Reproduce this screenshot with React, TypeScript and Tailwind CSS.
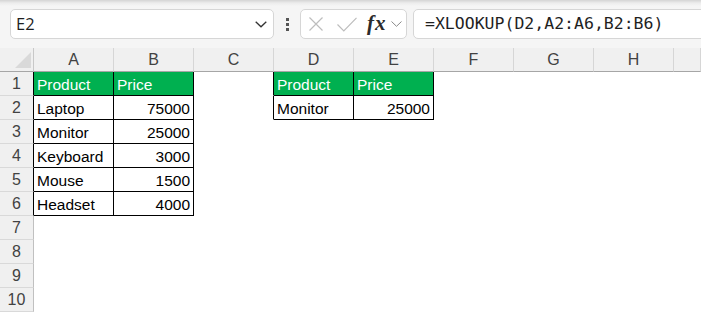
import React from "react";

type CellData = { text: string; right?: boolean; green?: boolean };

const data: Record<string, CellData> = {
  "1,1": { text: "Product", green: true },
  "1,2": { text: "Price", green: true },
  "2,1": { text: "Laptop" },
  "2,2": { text: "75000", right: true },
  "3,1": { text: "Monitor" },
  "3,2": { text: "25000", right: true },
  "4,1": { text: "Keyboard" },
  "4,2": { text: "3000", right: true },
  "5,1": { text: "Mouse" },
  "5,2": { text: "1500", right: true },
  "6,1": { text: "Headset" },
  "6,2": { text: "4000", right: true },
  "1,4": { text: "Product", green: true },
  "1,5": { text: "Price", green: true },
  "2,4": { text: "Monitor" },
  "2,5": { text: "25000", right: true },
};

const inTable = (r: number, c: number) =>
  (r >= 1 && r <= 6 && c >= 1 && c <= 2) || (r >= 1 && r <= 2 && c >= 4 && c <= 5);

const cols = ["A", "B", "C", "D", "E", "F", "G", "H", ""];
const rows = [1, 2, 3, 4, 5, 6, 7, 8, 9, 10];

const cellFont = { fontFamily: '"Liberation Sans", Arial, sans-serif' };

export default function App() {
  return (
    <div className="w-[701px] h-[312px] overflow-hidden bg-white select-none">
      {/* Formula bar */}
      <div className="h-[48px] flex items-center pl-[10px] bg-[linear-gradient(#d4d4d4_0px,#ececec_3px,#f5f5f5_6px)]">
        <div className="w-[264px] h-[30px] shrink-0 rounded-[5px] border border-[#d6d6d6] bg-white flex items-center justify-between pl-[5px] pr-[6px]">
          <span
            className="text-[16.5px] text-[#1f1f1f]"
            style={{ fontFamily: '"Open Sans", "Noto Sans", sans-serif' }}
          >
            E2
          </span>
          <svg width="12" height="7" viewBox="0 0 12 7">
            <path d="M0.7 0.7 L6 5.8 L11.3 0.7" fill="none" stroke="#333" strokeWidth="1.3" />
          </svg>
        </div>
        <div className="ml-[12px] w-[3px] flex flex-col gap-[2px] shrink-0">
          <div className="w-[3px] h-[3px] bg-[#555]" />
          <div className="w-[3px] h-[3px] bg-[#555]" />
          <div className="w-[3px] h-[3px] bg-[#555]" />
        </div>
        <div className="ml-[11px] w-[107px] h-[30px] shrink-0 rounded-[5px] border border-[#d6d6d6] bg-white flex items-center">
          <svg className="ml-[8px]" width="14" height="14" viewBox="0 0 14 14">
            <path d="M0.5 0.5 L13.5 13.5 M13.5 0.5 L0.5 13.5" stroke="#bdbdbd" strokeWidth="1.2" />
          </svg>
          <svg className="ml-[14px]" width="20" height="15" viewBox="0 0 20 15">
            <path d="M0.5 7.5 L6.8 14 L19.5 0.8" fill="none" stroke="#bdbdbd" strokeWidth="1.2" />
          </svg>
          <span
            className="ml-[10px] text-[21px] italic font-semibold text-[#2b2b2b] leading-none tracking-[1px] -mt-[2px]"
            style={{ fontFamily: '"Liberation Serif", "DejaVu Serif", serif' }}
          >
            fx
          </span>
          <svg className="ml-[4px]" width="11" height="6" viewBox="0 0 11 6">
            <path d="M0.5 0.5 L5.5 5.3 L10.5 0.5" fill="none" stroke="#8a8a8a" strokeWidth="1" />
          </svg>
        </div>
        <div className="ml-[6px] flex-1 -mr-[12px] h-[30px] rounded-[5px] border border-[#d6d6d6] bg-white flex items-center pl-[11px]">
          <span
            className="text-[16.5px] text-[#1f1f1f] whitespace-nowrap"
            style={{ fontFamily: '"DejaVu Sans Mono", "Liberation Mono", monospace' }}
          >
            =XLOOKUP(D2,A2:A6,B2:B6)
          </span>
        </div>
      </div>

      {/* Sheet grid */}
      <div className="grid grid-cols-[34px_repeat(8,80px)_1fr] grid-rows-[repeat(11,24px)]">
        {/* corner */}
        <div className="bg-[#f0f0f0] border-r border-b border-r-[#c8c8c8] border-b-[#a6a6a6] flex items-end justify-end pr-[2px] pb-[3px]">
          <svg width="16" height="16" viewBox="0 0 16 16">
            <path d="M16 0 L16 16 L0 16 Z" fill="#d9d9d9" />
          </svg>
        </div>
        {cols.map((c, i) => (
          <div
            key={i}
            className="bg-[#f0f0f0] border-r border-b border-r-[#d6d6d6] border-b-[#a6a6a6] flex items-center justify-center text-[16px] text-[#424242]"
            style={cellFont}
          >
            {c}
          </div>
        ))}
        {rows.map((r) => (
          <React.Fragment key={r}>
            <div
              className={`bg-[#f0f0f0] border-r border-b border-b-[#d9d9d9] flex items-center justify-center text-[16px] text-[#424242] ${
                inTable(r, 1) ? "border-r-black" : "border-r-[#c0c0c0]"
              }`}
              style={cellFont}
            >
              {r}
            </div>
            {cols.map((_, i) => {
              const c = i + 1;
              const d = data[`${r},${c}`];
              const t = inTable(r, c);
              const rightBlack = t || inTable(r, c + 1);
              return (
                <div
                  key={c}
                  className={`border-r border-b flex items-center pt-[2px] px-[3px] text-[15.5px] whitespace-nowrap overflow-hidden ${
                    rightBlack ? "border-r-black" : "border-r-white"
                  } ${t ? "border-b-black" : "border-b-white"} ${
                    d?.green ? "bg-[#00b050] text-white" : "bg-white text-black"
                  } ${d?.right ? "justify-end" : "justify-start"}`}
                  style={cellFont}
                >
                  {d?.text ?? ""}
                </div>
              );
            })}
          </React.Fragment>
        ))}
      </div>
    </div>
  );
}
